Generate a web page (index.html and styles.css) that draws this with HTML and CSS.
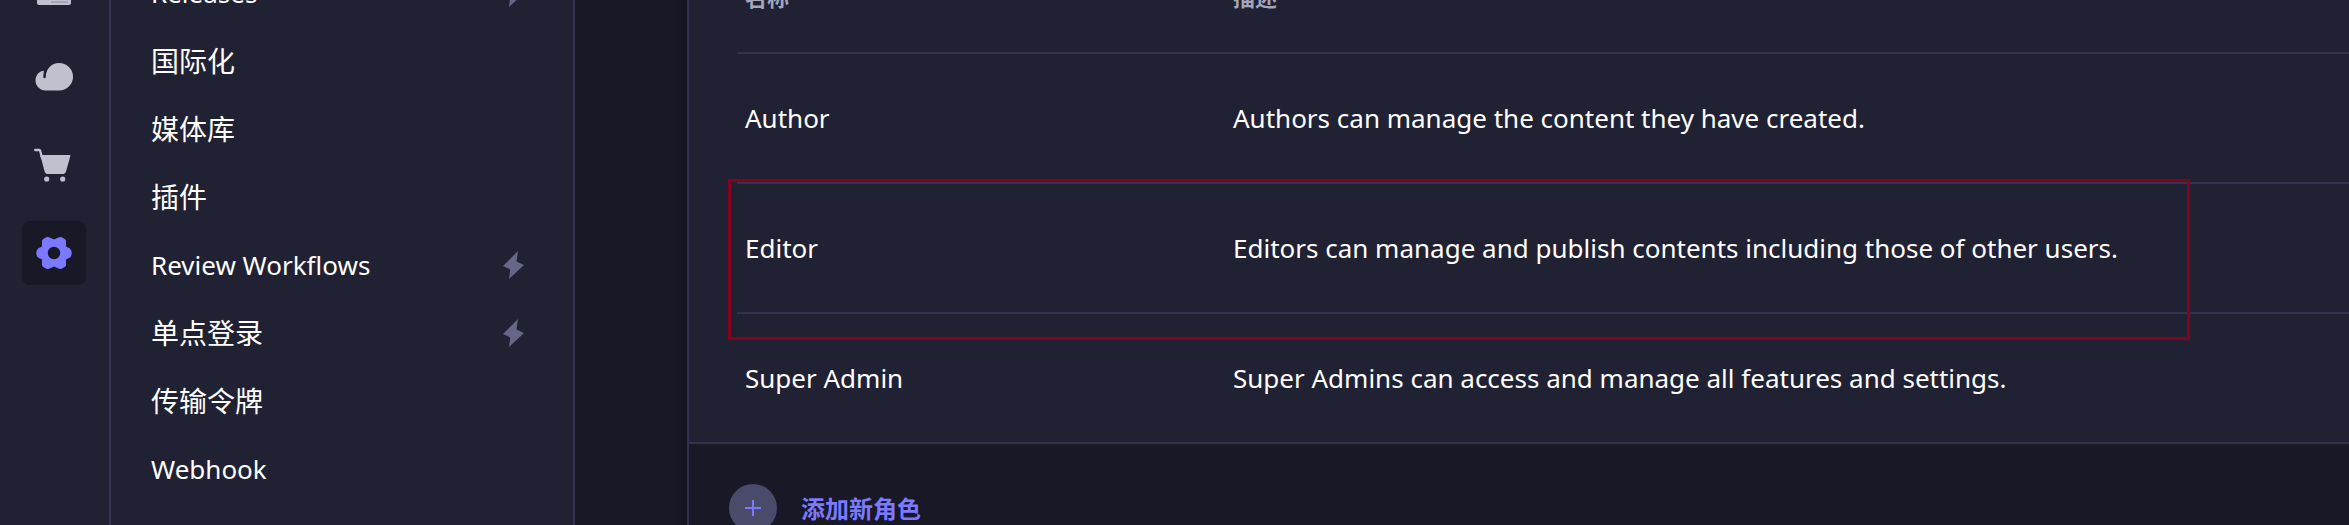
FILE: index.html
```html
<!DOCTYPE html>
<html lang="zh-CN">
<head>
<meta charset="utf-8">
<title>角色</title>
<link rel="stylesheet" href="styles.css">
</head>
<body>
<div class="app">
  <nav class="rail" aria-label="主导航">
    <a class="rail-link" href="#" aria-label="媒体">
      <svg width="36" height="36" viewBox="0 0 36 36"><path fill="#c0c0cf" d="M1 7h34v25a2 2 0 0 1-2 2H3a2 2 0 0 1-2-2z"/><path fill="#a5a5ba" d="M15 30h17v2H15z"/></svg>
    </a>
    <a class="rail-link" href="#" aria-label="云">
      <svg width="40" height="40" viewBox="0 0 40 40"><path fill="#c0c0cf" d="M25 6a14 13.700 0 0 1 0 27.500H11.500C6 33.500 1.500 29 1.500 23.500 1.500 18 5.500 14 10 13.800q-.7 3-.7 6.200a1.200 1.200 0 0 0 2.500 0C11.800 12 17.500 6 25 6z"/></svg>
    </a>
    <a class="rail-link" href="#" aria-label="市场">
      <svg width="40" height="40" viewBox="0 0 40 40"><path d="M1.300 5H5q1 0 1.300 1.200L8 13" fill="none" stroke="#c0c0cf" stroke-width="2.400" stroke-linecap="round"/><path fill="#c0c0cf" d="M6.300 10H36q.6 0 .4.700l-4.300 15.500q-.8 2.800-3.600 2.800H14q-2.800 0-3.500-2.800z"/><circle cx="12.700" cy="34" r="2.600" fill="#c0c0cf"/><circle cx="28.700" cy="34" r="2.600" fill="#c0c0cf"/></svg>
    </a>
    <a class="rail-link active" href="#" aria-label="设置" aria-current="page">
      <svg width="40" height="40" viewBox="0 0 40 40"><path fill="#7b79ff" d="M20 6.500L25 4.300Q27 3.600 29 5L31 6.300Q32 7 32 8V13.500L36 15.500Q37.700 17 37.700 20T36 24.500L32 26.500V32Q32 33 31 33.700L29 35Q27 36.400 25 35.700L20 33.500 15 35.700Q13 36.400 11 35L9 33.700Q8 33 8 32V26.500L4 24.500Q2.300 23 2.300 20T4 15.500L8 13.500V8Q8 7 9 6.300L11 5Q13 3.600 15 4.300z"/><circle cx="20" cy="20" r="6.200" fill="#181826"/></svg>
    </a>
  </nav>

  <nav class="sidebar" aria-label="设置">
    <a class="side-link latin" href="#">Releases<svg class="bolt" width="22" height="28" viewBox="0 0 22 28"><path d="M15 0l-1.500 10.500L21 14 6 28l1.300-9.500L0 15z"/></svg></a>
    <a class="side-link" href="#">国际化</a>
    <a class="side-link" href="#">媒体库</a>
    <a class="side-link" href="#">插件</a>
    <a class="side-link latin" href="#">Review Workflows<svg class="bolt" width="22" height="28" viewBox="0 0 22 28"><path d="M15 0l-1.500 10.500L21 14 6 28l1.300-9.500L0 15z"/></svg></a>
    <a class="side-link" href="#">单点登录<svg class="bolt" width="22" height="28" viewBox="0 0 22 28"><path d="M15 0l-1.500 10.500L21 14 6 28l1.300-9.500L0 15z"/></svg></a>
    <a class="side-link" href="#">传输令牌</a>
    <a class="side-link latin" href="#">Webhook</a>
  </nav>

  <main class="content">
    <section class="card">
      <div class="table-wrap">
        <table class="roles">
          <thead>
            <tr><th class="col-name" scope="col">名称</th><th scope="col">描述</th></tr>
          </thead>
          <tbody>
            <tr><td>Author</td><td>Authors can manage the content they have created.</td></tr>
            <tr><td>Editor</td><td>Editors can manage and publish contents including those of other users.</td></tr>
            <tr><td>Super Admin</td><td>Super Admins can access and manage all features and settings.</td></tr>
          </tbody>
        </table>
        <div class="highlight"></div>
      </div>
      <button class="add-role" type="button">
        <span class="plus"><svg width="16" height="16" viewBox="0 0 16 16"><path d="M8 0v16M0 8h16" stroke="#7b79ff" stroke-width="2"/></svg></span>
        添加新角色
      </button>
    </section>
  </main>
</div>
</body>
</html>
```
FILE: styles.css
```css
* {
  box-sizing: border-box;
}

body {
  margin: 0;
  background: #181826;
  color: #ffffff;
  font-family: "Noto Sans", "Noto Sans CJK SC", sans-serif;
  font-size: 26px;
  line-height: 36px;
}

a {
  color: inherit;
  text-decoration: none;
}

.app {
  display: flex;
  height: 100vh;
  overflow: hidden;
}

.rail {
  display: flex;
  flex: none;
  flex-direction: column;
  gap: 24px;
  width: 111px;
  margin-top: -43px;
  padding-left: 22px;
  background: #212134;
  border-right: 2px solid #32324d;
}

.rail-link {
  display: flex;
  flex: none;
  align-items: center;
  justify-content: center;
  width: 64px;
  height: 64px;
  border-radius: 8px;
}

.rail-link.active {
  background: #181826;
}

.sidebar {
  flex: none;
  width: 464px;
  margin-top: -41px;
  background: #212134;
  border-right: 2px solid #32324d;
}

.side-link {
  display: flex;
  align-items: center;
  justify-content: space-between;
  height: 68px;
  padding: 0 48px 0 40px;
  font-size: 28px;
}

.side-link.latin {
  font-size: 26px;
}

.bolt {
  fill: #666687;
}

.content {
  flex: 1;
  min-width: 0;
  margin-top: -58px;
  padding-left: 112px;
}

.card {
  min-width: 1700px;
  background: #212134;
  border-left: 2px solid #32324d;
  box-shadow: 0 0 10px #10101c;
}

.table-wrap {
  position: relative;
  padding-left: 48px;
  border-bottom: 2px solid #32324d;
}

.roles {
  width: 100%;
  border-collapse: separate;
  border-spacing: 0;
  table-layout: fixed;
}

.roles th,
.roles td {
  padding: 0 8px;
  text-align: left;
}

.roles th {
  height: 112px;
  color: #a5a5ba;
  font-size: 22px;
  font-weight: 700;
  border-bottom: 2px solid #32324d;
}

.col-name {
  width: 488px;
}

.roles td {
  height: 130px;
  border-bottom: 2px solid #32324d;
}

.roles tbody tr:last-child td {
  height: 128px;
  border-bottom: 0;
}

.highlight {
  position: absolute;
  top: 237px;
  left: 39px;
  width: 1462px;
  height: 161px;
  border: 3px solid #88001b;
  pointer-events: none;
}

.add-role {
  display: flex;
  align-items: center;
  gap: 24px;
  width: 100%;
  padding: 40px;
  border: 0;
  background: #181826;
  color: #7b79ff;
  font: 700 24px/48px "Noto Sans CJK SC", sans-serif;
}

.plus {
  display: flex;
  align-items: center;
  justify-content: center;
  width: 48px;
  height: 48px;
  border-radius: 50%;
  background: #4a4a6a;
}
```
